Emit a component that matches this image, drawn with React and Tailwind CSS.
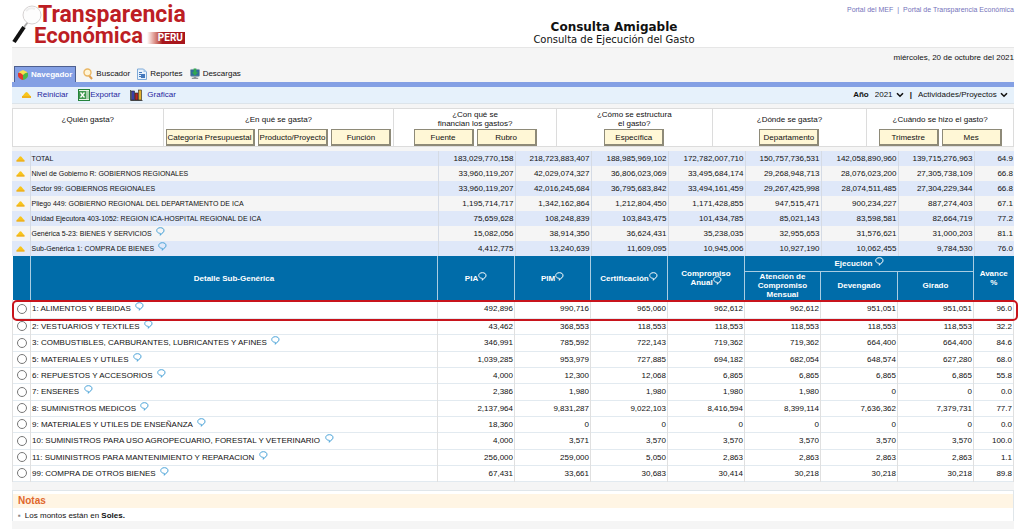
import { useState } from 'react';

const summaryRows = [
  ['TOTAL', false, '183,029,770,158', '218,723,883,407', '188,985,969,102', '172,782,007,710', '150,757,736,531', '142,058,890,960', '139,715,276,963', '64.9'],
  ['Nivel de Gobierno R: GOBIERNOS REGIONALES', false, '33,960,119,207', '42,029,074,327', '36,806,023,069', '33,495,684,174', '29,268,948,713', '28,076,023,200', '27,305,738,109', '66.8'],
  ['Sector 99: GOBIERNOS REGIONALES', false, '33,960,119,207', '42,016,245,684', '36,795,683,842', '33,494,161,459', '29,267,425,998', '28,074,511,485', '27,304,229,344', '66.8'],
  ['Pliego 449: GOBIERNO REGIONAL DEL DEPARTAMENTO DE ICA', false, '1,195,714,717', '1,342,162,864', '1,212,804,450', '1,171,428,855', '947,515,471', '900,234,227', '887,274,403', '67.1'],
  ['Unidad Ejecutora 403-1052: REGION ICA-HOSPITAL REGIONAL DE ICA', false, '75,659,628', '108,248,839', '103,843,475', '101,434,785', '85,021,143', '83,598,581', '82,664,719', '77.2'],
  ['Genérica 5-23: BIENES Y SERVICIOS', true, '15,082,056', '38,914,350', '36,624,431', '35,238,035', '32,955,653', '31,576,621', '31,000,203', '81.1'],
  ['Sub-Genérica 1: COMPRA DE BIENES', true, '4,412,775', '13,240,639', '11,609,095', '10,945,006', '10,927,190', '10,062,455', '9,784,530', '76.0'],
];

const detailRows = [
  ['1: ALIMENTOS Y BEBIDAS', '492,896', '990,716', '965,060', '962,612', '962,612', '951,051', '951,051', '96.0'],
  ['2: VESTUARIOS Y TEXTILES', '43,462', '368,553', '118,553', '118,553', '118,553', '118,553', '118,553', '32.2'],
  ['3: COMBUSTIBLES, CARBURANTES, LUBRICANTES Y AFINES', '346,991', '785,592', '722,143', '719,362', '719,362', '664,400', '664,400', '84.6'],
  ['5: MATERIALES Y UTILES', '1,039,285', '953,979', '727,885', '694,182', '682,054', '648,574', '627,280', '68.0'],
  ['6: REPUESTOS Y ACCESORIOS', '4,000', '12,300', '12,068', '6,865', '6,865', '6,865', '6,865', '55.8'],
  ['7: ENSERES', '2,386', '1,980', '1,980', '1,980', '1,980', '0', '0', '0.0'],
  ['8: SUMINISTROS MEDICOS', '2,137,964', '9,831,287', '9,022,103', '8,416,594', '8,399,114', '7,636,362', '7,379,731', '77.7'],
  ['9: MATERIALES Y UTILES DE ENSEÑANZA', '18,360', '0', '0', '0', '0', '0', '0', '0.0'],
  ['10: SUMINISTROS PARA USO AGROPECUARIO, FORESTAL Y VETERINARIO', '4,000', '3,571', '3,570', '3,570', '3,570', '3,570', '3,570', '100.0'],
  ['11: SUMINISTROS PARA MANTENIMIENTO Y REPARACION', '256,000', '259,000', '5,050', '2,863', '2,863', '2,863', '2,863', '1.1'],
  ['99: COMPRA DE OTROS BIENES', '67,431', '33,661', '30,683', '30,414', '30,218', '30,218', '30,218', '89.8'],
];

const questions = [
  { title: '¿Quién gasta?', buttons: [] },
  { title: '¿En qué se gasta?', buttons: ['Categoría Presupuestal', 'Producto/Proyecto', 'Función'] },
  { title: '¿Con qué se\nfinancian los gastos?', buttons: ['Fuente', 'Rubro'] },
  { title: '¿Cómo se estructura\nel gasto?', buttons: ['Específica'] },
  { title: '¿Dónde se gasta?', buttons: ['Departamento'] },
  { title: '¿Cuándo se hizo el gasto?', buttons: ['Trimestre', 'Mes'] },
];

const Logo = () => (
  <div className="flex items-start">
    <svg className="h-[44px] w-[30px] shrink-0" viewBox="0 0 30 44" aria-hidden="true">
      <path d="M2 42 L12 27" stroke="#111" strokeWidth="4" />
      <path d="M12 27 L16 22" stroke="#aaa" strokeWidth="2" />
      <circle cx="20" cy="15" r="9" fill="#fdfdfd" stroke="#d6d2d2" strokeWidth="1" />
      <path d="M14 11 A8 8 0 0 1 23 9" fill="none" stroke="#eee" strokeWidth="2" />
    </svg>
    <div className="-ml-2 pt-1 font-[Roboto,sans-serif] font-bold text-[#bd1e24]">
      <div className="pl-1 text-[23px] leading-[21px]">Transparencia</div>
      <div className="flex items-center gap-1">
        <span className="text-[22px] leading-[21px]">Económica</span>
        <span className="mt-1 h-3 w-[38px] bg-linear-to-r from-white to-[#a8161c] to-40% pr-[2px] text-right text-[10px] leading-3 text-white">PERU</span>
      </div>
    </div>
  </div>
);

const Bubble = ({ className = 'text-[#4aa3d8]' }) => (
  <svg className={`-mt-1 inline-block h-[9px] w-[9px] align-baseline ${className}`} viewBox="0 0 9 9" fill="none" stroke="currentColor" aria-hidden="true">
    <path d="M3.4 6.2 C0.4 5.7 0.2 2.8 1.6 1.6 C2.9 0.4 5.9 0.4 7.2 1.6 C8.6 2.9 8.2 5.5 6 6.2 L4.3 8.3 L4.3 6.3 Z" />
  </svg>
);

const UpIcon = ({ className }) => (
  <svg className={className} viewBox="0 0 10 8" aria-hidden="true">
    <path d="M1 5 L4 1.5 Q5 0.5 6 1.5 L9 5 Z" fill="#f8c51c" />
    <path d="M0.5 5 H9.5 V7 H0.5 Z" fill="#f0b21c" />
  </svg>
);

const CubeIcon = () => (
  <svg className="h-3 w-[10px]" viewBox="0 0 10 12" aria-hidden="true">
    <path d="M1 3 L5 1 L9 3 L9 6 L5 7 L1 5 Z" fill="#f7e04e" />
    <path d="M0 4 Q2 3 5 6 V11 Q1 10 0 7 Z" fill="#e2382d" />
    <path d="M10 4 Q8 3 5 6 V11 Q9 10 10 7 Z" fill="#4cb848" />
  </svg>
);

const SearchIcon = () => (
  <svg className="h-3 w-[10px]" viewBox="0 0 10 12" aria-hidden="true">
    <path d="M6 7.5 L9 11" stroke="#e0a050" strokeWidth="2" />
    <circle cx="4.5" cy="4.5" r="3.5" fill="#fff5d8" stroke="#eab765" strokeWidth="1.4" />
  </svg>
);

const ReportIcon = () => (
  <svg className="h-3 w-[10px]" viewBox="0 0 10 12" aria-hidden="true">
    <path d="M0.5 1 H6.5 L9.5 4 V11.5 H0.5 Z" fill="#e8f2fc" stroke="#7faad8" />
    <path d="M6.5 1 V4 H9.5 Z" fill="#9fc3e8" />
    <path d="M2 4.5 H5 M2 6.5 H8 M2 8.5 H8" stroke="#4478bc" />
    <path d="M4 6 H8 V10 H4 Z" fill="#4478bc" />
  </svg>
);

const DownloadIcon = () => (
  <svg className="h-3 w-[10px]" viewBox="0 0 11 12" aria-hidden="true">
    <rect x="0.5" y="1" width="10" height="7.5" rx="1" fill="#316c9c" stroke="#8ba0ae" />
    <path d="M4 0 H7 V4 H9 L5.5 8 L2 4 H4 Z" fill="#32a852" />
    <path d="M4 9 H7 V10 H9 V11.5 H2 V10 H4 Z" fill="#8d9499" />
  </svg>
);

const ExcelIcon = () => (
  <svg className="h-3 w-3" viewBox="0 0 12 12" aria-hidden="true">
    <rect x="0.5" y="0.5" width="11" height="11" fill="#e9f4e9" stroke="#26833c" />
    <path d="M7 3 H11 M7 5 H11 M7 7 H11 M7 9 H11" stroke="#67ae70" />
    <path d="M1 2 H8 V10 H1 Z" fill="#3f9850" />
    <path d="M2.5 3.5 L6.5 8.5 M6.5 3.5 L2.5 8.5" stroke="#fff" strokeWidth="1.3" />
  </svg>
);

const ChartIcon = () => (
  <svg className="h-3 w-[13px]" viewBox="0 0 13 12" aria-hidden="true">
    <path d="M0.5 1 V11.5 H12.5" fill="none" stroke="#555" />
    <rect x="1.5" y="2" width="3" height="9" fill="#3a3fa8" stroke="#222" strokeWidth="0.6" />
    <rect x="5" y="4" width="3" height="7" fill="#b52525" stroke="#222" strokeWidth="0.6" />
    <rect x="8.5" y="1" width="3" height="10" fill="#e2b02a" stroke="#222" strokeWidth="0.6" />
  </svg>
);

const Select = ({ children, ...props }) => (
  <span className="relative inline-flex items-center">
    <select className="appearance-none pr-[11px] text-[8px] leading-3" {...props}>{children}</select>
    <svg className="pointer-events-none absolute right-0 h-[6px] w-2" viewBox="0 0 8 6" fill="none" aria-hidden="true">
      <path d="M1 1.2 L4 4.2 L7 1.2" stroke="#111" strokeWidth="1.6" />
    </svg>
  </span>
);

const Columns = () => (
  <colgroup>
    <col className="w-[18px]" />
    <col />
    <col className="w-[77px]" />
    <col className="w-[76px]" />
    <col className="w-[77px]" />
    <col className="w-[77px]" />
    <col className="w-[76px]" />
    <col className="w-[77px]" />
    <col className="w-[76px]" />
    <col className="w-[40px]" />
  </colgroup>
);

const QuestionPanel = () => (
  <div className="mt-1 grid h-[39px] grid-cols-[151fr_231fr_163fr_156fr_155fr_146fr] border border-[#dcdcdc] bg-white">
    {questions.map(({ title, buttons }) => (
      <div key={title} className="flex min-w-0 flex-col items-center border-r border-[#dcdcdc] last:border-r-0">
        <div className="flex h-5 items-center text-center text-[8px] leading-[9px] whitespace-pre-line">{title}</div>
        <div className="flex justify-center gap-[3px]">
          {buttons.map((label) => (
            <button key={label} type="button" className="h-[17px] min-w-[60px] whitespace-nowrap border border-r-2 border-b-2 border-[#8e8a78] bg-[#fff7d6] px-[1px] text-[8px] leading-[13px]">
              {label}
            </button>
          ))}
        </div>
      </div>
    ))}
  </div>
);

const App = () => {
  const [selected, setSelected] = useState(null);

  return (
    <div className="flex min-h-screen flex-col bg-white pr-[10px] pl-3 font-['Liberation_Sans',Arial,sans-serif] text-[8px] text-[#111]">
      <header className="grid h-[47px] grid-cols-[202px_1fr]">
        <Logo />
        <div>
          <nav className="flex h-5 items-center justify-end text-[7px] leading-[10px] text-[#7673bb]">
            <a href="#mef">Portal del MEF</a>
            <span className="px-1">|</span>
            <a href="#transparencia">Portal de Transparencia Económica</a>
          </nav>
          <div className="text-center font-['DejaVu_Sans',Verdana,sans-serif]">
            <h1 className="text-[12px] leading-[14px] font-bold">Consulta Amigable</h1>
            <p className="text-[10px] leading-3">Consulta de Ejecución del Gasto</p>
          </div>
        </div>
      </header>

      <div className="grow bg-[#f5f5f5]">
        <div className="flex h-[35px] items-end justify-between border-t border-[#e6e6e6] pl-[2px]">
          <nav className="flex h-4 items-center gap-[7px]">
            <a href="#navegador" className="flex h-4 items-center gap-[3px] border border-b-0 border-[#4d5f8f] bg-[#84a0e4] px-[3px] font-bold text-white"><CubeIcon />Navegador</a>
            <a href="#buscador" className="flex items-center gap-[3px]"><SearchIcon />Buscador</a>
            <a href="#reportes" className="flex items-center gap-[3px]"><ReportIcon />Reportes</a>
            <a href="#descargas" className="flex items-center gap-[3px]"><DownloadIcon />Descargas</a>
          </nav>
          <div className="self-start pt-1 leading-3">miércoles, 20 de octubre del 2021</div>
        </div>

        <div className="flex h-[22px] items-center justify-between border-t-[5px] border-b border-[#84a0e4] border-b-[#dce4ea] bg-[#e6f1fb] px-[6px]">
          <div className="flex items-center gap-[10px] pl-[3px] text-[#2626a0]">
            <button type="button" className="flex items-center gap-[5px]"><UpIcon className="h-2 w-[11px]" />Reiniciar</button>
            <button type="button" className="flex items-center"><ExcelIcon />Exportar</button>
            <button type="button" className="flex items-center gap-1"><ChartIcon />Graficar</button>
          </div>
          <div className="flex items-center">
            <label htmlFor="anio" className="pr-[6px] font-bold">Año</label>
            <Select id="anio"><option>2021</option></Select>
            <span className="px-[6px] font-bold">|</span>
            <Select aria-label="Tipo"><option>Actividades/Proyectos</option></Select>
          </div>
        </div>

        <QuestionPanel />

        <table className="mt-1 w-full table-fixed border-collapse text-right leading-[13px]">
          <Columns />
          <tbody>
            {summaryRows.map(([name, help, ...values]) => (
              <tr key={name} className="h-[15px] odd:bg-[#dfe8f9] even:bg-[#f5f5f5]">
                <td className="border-r border-[#d5dbe5] p-0 text-center"><UpIcon className="mx-auto h-2 w-[9px]" /></td>
                <td className="p-0 pl-[1px] text-left text-[7px]">{name}{help && <> &nbsp;<Bubble /></>}</td>
                {values.map((value, i) => (
                  <td key={i} className="border-l border-[#d5dbe5] p-0 pr-[1px]">{value}</td>
                ))}
              </tr>
            ))}
          </tbody>
        </table>

        <div className="relative">
          <table className="w-full table-fixed border-collapse bg-white text-right leading-[13px]">
            <Columns />
            <thead className="bg-[#006ca9] text-center leading-[9px] text-white">
              <tr className="h-[15px]">
                <th rowSpan={2} className="border-r border-[#a9cde2] p-0" />
                <th rowSpan={2} className="border-r border-[#a9cde2] p-0">Detalle Sub-Genérica</th>
                <th rowSpan={2} className="border-r border-[#a9cde2] p-0">PIA<Bubble className="text-white" /></th>
                <th rowSpan={2} className="border-r border-[#a9cde2] p-0">PIM<Bubble className="text-white" /></th>
                <th rowSpan={2} className="border-r border-[#a9cde2] p-0">Certificación<Bubble className="text-white" /></th>
                <th rowSpan={2} className="border-r border-[#a9cde2] px-2 py-0">Compromiso Anual<Bubble className="text-white" /></th>
                <th colSpan={3} className="border-r border-b border-[#a9cde2] p-0">Ejecución <Bubble className="text-white" /></th>
                <th rowSpan={2} className="px-1 py-0">Avance %</th>
              </tr>
              <tr className="h-[29px]">
                <th className="border-r border-[#a9cde2] px-2 py-0">Atención de Compromiso Mensual</th>
                <th className="border-r border-[#a9cde2] p-0">Devengado</th>
                <th className="border-r border-[#a9cde2] p-0">Girado</th>
              </tr>
            </thead>
            <tbody>
              {detailRows.map(([name, ...values], index) => (
                <tr key={name} className="h-4 border-b border-[#e2eaf0] first:h-[18px] nth-[3n]:h-[17px]">
                  <td className="border-x border-[#e0e0e0] p-0">
                    <input
                      id={`fila-${index}`}
                      type="radio"
                      name="detalle"
                      checked={selected === index}
                      onChange={() => setSelected(index)}
                      className="mx-auto block size-[10px] appearance-none rounded-full border border-[#777] bg-white checked:bg-[#006ca9]"
                    />
                  </td>
                  <td className="p-0 pl-[1px] text-left"><label htmlFor={`fila-${index}`}>{name}</label> &nbsp;<Bubble /></td>
                  {values.map((value, i) => (
                    <td key={i} className="border-x border-[#e0e0e0] p-0 pr-[1px]">{value}</td>
                  ))}
                </tr>
              ))}
            </tbody>
          </table>
          <div className="pointer-events-none absolute top-11 -right-1 left-0 h-[21px] rounded-[5px] border-2 border-[#c8141c]" />
        </div>

        <section className="mt-2 border border-b-0 border-[#e0e6ea] bg-white pt-[3px]">
          <h2 className="h-[14px] bg-[#fff5e4] pl-[5px] text-[10px] leading-[14px] font-bold text-[#e0672c]">Notas</h2>
          <ul className="pt-[3px] pl-[5px] leading-[10px]">
            <li><span className="pr-1 text-[#888]">▪</span>Los montos están en <b>Soles.</b></li>
          </ul>
        </section>
      </div>
    </div>
  );
};

export default App;
